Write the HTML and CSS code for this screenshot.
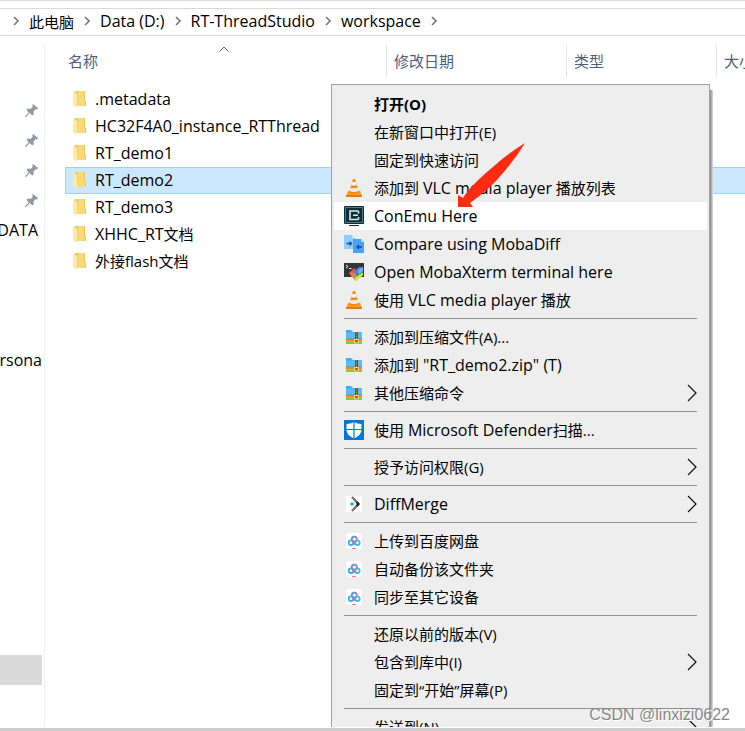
FILE: index.html
```html
<!DOCTYPE html>
<html lang="zh-CN">
<head>
	<meta charset="UTF-8">
	<title>workspace</title>
	<link rel="stylesheet" href="styles.css">
</head>
<body>
	<!-- 公用图标 -->
	<svg class="defs" aria-hidden="true">
		<symbol id="next" viewBox="0 0 6 10"><path d="M1 1l4 4-4 4" fill="none" stroke="#7a7a7a" stroke-width="1.6"/></symbol>
		<symbol id="more" viewBox="0 0 10 18"><path d="M1 1l8 8-8 8" fill="none" stroke="#111" stroke-width="1.2"/></symbol>
		<symbol id="pin" viewBox="0 0 13 13">
			<path d="M8 0l5 4-1 1.500-1.500-.2-2 2.200.3 2.700-1.500 1.400-2.600-2.500L1 13 0 12.700.2 12l3.500-3.600L1.500 5.700l1.300-1.200 2.700.4L7.700 2.700 7.300 1z" fill="#8e9aa5"/>
		</symbol>
		<symbol id="folder" viewBox="0 0 13 18">
			<path d="M2 1h10v9l1 1v5H2z" fill="#f0c659"/>
			<path d="M5 1h6v9l1 1v5H4z" fill="#f9d978"/>
			<path d="M0 1l4 3v13l-1 .5L0 15z" fill="#ffe9a6"/>
		</symbol>
		<symbol id="vlc" viewBox="0 0 20 20">
			<path d="M4 13h12l2 5.500H2z" fill="#ff9a1c"/>
			<path d="M2 17h16v2H2z" fill="#e87b08"/>
			<path d="M9 1h2l4 13.500q-5 2.500-10 0z" fill="#f58a0c"/>
			<path d="M8.200 4h3.600l1 3.500H7.200z" fill="#f3f3f3"/>
			<path d="M6.300 10h7.400l.8 3q-4.500 1.800-9 0z" fill="#e9e9e9"/>
		</symbol>
		<symbol id="zip" viewBox="0 0 20 20">
			<path d="M2 3h5l2 2h9v9H2z" fill="#42aef0"/>
			<path d="M2 6l16-1v6H2z" fill="#58bdf7"/>
			<path d="M2 12h16v2.500H2z" fill="#f58220"/>
			<path d="M2 14.500h16V17H2z" fill="#8bc727"/>
			<path d="M11 5h3v10h-3z" fill="#8b4513"/>
			<path d="M12.500 5v8" stroke="#d59a4c" stroke-width="1" stroke-dasharray="1 1"/>
			<path d="M10.700 12.500h3.600v3.500h-3.600z" fill="#a65a12" stroke="#ffe08a" stroke-width="1"/>
		</symbol>
		<symbol id="pan" viewBox="0 0 20 20">
			<rect x="2" y="2" width="16" height="16" rx="3" fill="#fff"/>
			<g fill="none" stroke-width="1.800">
				<circle cx="10.300" cy="8.300" r="2.600" stroke="#f0647c"/>
				<path d="M7.700 8.500a2.600 2.600 0 0 1 4.500-2" stroke="#4aa5f5"/>
				<circle cx="7" cy="11.700" r="2.300" stroke="#35aef5"/>
				<circle cx="13.300" cy="11.700" r="2.300" stroke="#35bdf5"/>
				<path d="M8.600 10.100l3 3.200" stroke="#f0647c"/>
			</g>
			<path d="M8 17.500h4" stroke="#f77c92" stroke-width="1"/>
		</symbol>
	</svg>

	<div class="window">
		<nav class="address">
			<svg class="next"><use href="#next"/></svg>
			<a href="#">此电脑</a>
			<svg class="next"><use href="#next"/></svg>
			<a href="#" class="en">Data (D:)</a>
			<svg class="next"><use href="#next"/></svg>
			<a href="#" class="en">RT-ThreadStudio</a>
			<svg class="next"><use href="#next"/></svg>
			<a href="#" class="en">workspace</a>
			<svg class="next"><use href="#next"/></svg>
		</nav>

		<div class="main">
			<div class="side en">
				<div class="side-row"><svg class="pin"><use href="#pin"/></svg></div>
				<div class="side-row"><svg class="pin"><use href="#pin"/></svg></div>
				<div class="side-row"><svg class="pin"><use href="#pin"/></svg></div>
				<div class="side-row"><svg class="pin"><use href="#pin"/></svg></div>
				<div class="side-row">DATA</div>
				<div class="side-row drive">ersona</div>
				<div class="side-row current"></div>
			</div>

			<div class="list">
				<table class="files">
					<colgroup>
						<col class="col-name"><col class="col-date"><col class="col-type"><col>
					</colgroup>
					<thead>
						<tr>
							<th class="sorted"><svg class="sort" viewBox="0 0 10 6"><path d="M.5 5.500L5 1l4.500 4.500" fill="none" stroke="#666"/></svg><button>名称</button></th>
							<th><button>修改日期</button></th>
							<th><button>类型</button></th>
							<th><button>大小</button></th>
						</tr>
					</thead>
					<tbody>
						<tr><td colspan="4" class="en"><svg class="folder"><use href="#folder"/></svg>.metadata</td></tr>
						<tr><td colspan="4" class="en"><svg class="folder"><use href="#folder"/></svg>HC32F4A0_instance_RTThread</td></tr>
						<tr><td colspan="4" class="en"><svg class="folder"><use href="#folder"/></svg>RT_demo1</td></tr>
						<tr class="selected"><td colspan="4" class="en"><svg class="folder"><use href="#folder"/></svg>RT_demo2</td></tr>
						<tr><td colspan="4" class="en"><svg class="folder"><use href="#folder"/></svg>RT_demo3</td></tr>
						<tr><td colspan="4"><svg class="folder"><use href="#folder"/></svg><span class="en">XHHC_RT</span>文档</td></tr>
						<tr><td colspan="4"><svg class="folder"><use href="#folder"/></svg>外接flash文档</td></tr>
					</tbody>
				</table>
			</div>
		</div>

		<!-- 右键菜单 -->
		<div class="menu">
			<button class="item default"><span class="icon"></span>打开(O)</button>
			<button class="item"><span class="icon"></span>在新窗口中打开(E)</button>
			<button class="item"><span class="icon"></span>固定到快速访问</button>
			<button class="item"><svg class="icon"><use href="#vlc"/></svg><span>添加到 <span class="en">VLC media player</span> 播放列表</span></button>
			<button class="item en hover">
				<svg class="icon" viewBox="0 0 20 20">
					<rect width="20" height="18" rx="1" fill="#06303c"/>
					<rect x="1.500" y="1.500" width="17" height="15" fill="none" stroke="#6f8a91" stroke-width=".8"/>
					<path d="M14.500 5H6v8.500h8.500M14.500 5v2.500M14.500 11v2.500M9 9.200h5" fill="none" stroke="#e9e5d5" stroke-width="1.600"/>
					<path d="M5 19.500h10" stroke="#06303c" stroke-width="1"/>
				</svg>ConEmu Here
			</button>
			<button class="item en">
				<svg class="icon" viewBox="0 0 20 20">
					<path d="M0 1h8l3 3v11H0z" fill="#8fcbfb"/>
					<path d="M8 1l3 3H8z" fill="#d3ebff"/>
					<path d="M9 5h8l3 3v11H9z" fill="#46a2f5"/>
					<path d="M17 5l3 3h-3z" fill="#b5dcff"/>
					<path d="M2.500 9.500H7M5.500 7.500l2 2-2 2M18 13h-4.500M15 11l-2 2 2 2" fill="none" stroke="#0b50a0" stroke-width="1.300"/>
				</svg>Compare using MobaDiff
			</button>
			<button class="item en">
				<svg class="icon" viewBox="0 0 20 20">
					<path d="M0 1h20v14H0z" fill="#333638"/>
					<path d="M2 3l2 1.500L2 6M5 6.500h2.500" fill="none" stroke="#fff" stroke-width=".9"/>
					<path d="M5 11l5-5 3 3-2 5-3 1z" fill="#f04a3e"/>
					<path d="M10 10l5-5h4v4l-5 5z" fill="#3d83ee"/>
					<path d="M14 8l5-3v4l-4 4z" fill="#77abf8"/>
					<path d="M7 14l4-3 2 3 6-4v3l-7 6z" fill="#78d52c"/>
					<path d="M5 11l3-1 4 4-1 3z" fill="#ff6b5c"/>
					<path d="M11 16l6-4 2-1v2l-7 6z" fill="#c6f13b"/>
				</svg>Open MobaXterm terminal here
			</button>
			<button class="item"><svg class="icon"><use href="#vlc"/></svg><span>使用 <span class="en">VLC media player</span> 播放</span></button>
			<hr>
			<button class="item"><svg class="icon"><use href="#zip"/></svg>添加到压缩文件(A)...</button>
			<button class="item"><svg class="icon"><use href="#zip"/></svg><span>添加到 <span class="en">"RT_demo2.zip" (T)</span></span></button>
			<button class="item"><svg class="icon"><use href="#zip"/></svg>其他压缩命令<svg class="more"><use href="#more"/></svg></button>
			<hr>
			<button class="item">
				<svg class="icon" viewBox="0 0 20 20">
					<path d="M0 0h20v20H0z" fill="#0078d7"/>
					<path d="M10 2q3 2 7.500 2v6q0 5-7.500 8.500Q2.500 15 2.500 10V4Q7 4 10 2z" fill="#fff"/>
					<path d="M10 2v17M2 9.500h16" stroke="#0078d7" stroke-width="1.200"/>
				</svg><span>使用 <span class="en">Microsoft Defender</span>扫描...</span>
			</button>
			<hr>
			<button class="item"><span class="icon"></span>授予访问权限(G)<svg class="more"><use href="#more"/></svg></button>
			<hr>
			<button class="item en">
				<svg class="icon" viewBox="0 0 20 20">
					<path d="M2 2h16v16H2z" fill="#fff"/>
					<path d="M8 3l6.500 7L8 17" fill="none" stroke="#777" stroke-width="2.400"/>
					<path d="M12.500 8l2 2-2 2" fill="none" stroke="#222" stroke-width="2"/>
					<circle cx="8" cy="10" r="1.800" fill="#12b5cc"/>
				</svg>DiffMerge<svg class="more"><use href="#more"/></svg>
			</button>
			<hr>
			<button class="item"><svg class="icon"><use href="#pan"/></svg>上传到百度网盘</button>
			<button class="item"><svg class="icon"><use href="#pan"/></svg>自动备份该文件夹</button>
			<button class="item"><svg class="icon"><use href="#pan"/></svg>同步至其它设备</button>
			<hr>
			<button class="item"><span class="icon"></span>还原以前的版本(V)</button>
			<button class="item"><span class="icon"></span>包含到库中(I)<svg class="more"><use href="#more"/></svg></button>
			<button class="item"><span class="icon"></span>固定到“开始”屏幕(P)</button>
			<hr>
			<button class="item"><span class="icon"></span>发送到(N)<svg class="more"><use href="#more"/></svg></button>
		</div>

		<svg class="arrow" viewBox="0 0 68 66"><path d="M67 2Q58 17 45 32 33 47 12 62L15 66H0V54L5 57Q12 45 36 25 52 11 67 2z" fill="#ff2a12"/></svg>
	</div>
	<div class="mark">CSDN @linxizi0622</div>
</body>
</html>
```

FILE: styles.css
```css
*{
	margin:0;
	padding:0;
	box-sizing: border-box;
}
body{
	font-family: "Open Sans","Noto Sans CJK SC",sans-serif;
	font-size: 15px;
	color:#000;
	background: #fff;
}
button{
	font: inherit;
	color: inherit;
	background: none;
	border:0;
	text-align: left;
	white-space: nowrap;
}
a{
	color:#000;
	text-decoration: none;
}
/* 英文比中文大一号 */
.en{
	font-size: 16px;
}
.defs{
	position: absolute;
	width: 0;
	height: 0;
}
.window{
	position: relative;
	height: 100vh;
	border-top:1px solid #d9d9d9;
	border-bottom:3px solid #ccc;
	padding-top:7px;
	padding-bottom:1px;
	display: flex;
	flex-direction: column;
	overflow: hidden;
}
/* 地址栏 */
.address{
	display: flex;
	align-items: center;
	gap:10px;
	height: 28px;
	padding-left:13px;
	padding-bottom:2px;
	border-top:1px solid #d9d9d9;
	border-bottom:1px solid #d9d9d9;
	white-space: nowrap;
}
.next{
	width: 6px;
	height: 10px;
}
.main{
	flex:1;
	display: flex;
	align-items: flex-start;
	min-height: 0;
	padding-top:9px;
}
/* 左侧导航 */
.side{
	flex:none;
	width: 45px;
	height: 100%;
	padding-top:50px;
	padding-right:2px;
	border-right:1px solid #f0f0f0;
	overflow: hidden;
}
.side-row{
	display: flex;
	align-items: center;
	justify-content: flex-end;
	height: 30px;
	padding-right:4px;
}
.pin{
	width: 13px;
	height: 13px;
}
.drive{
	margin-top:100px;
	padding-right:0;
}
.current{
	margin-top:280px;
	background: #d9d9d9;
}
/* 文件列表 */
.list{
	flex:1;
	min-width: 0;
	margin-left:20px;
}
.files{
	width: 100%;
	table-layout: fixed;
	border-spacing: 0;
}
.col-name{
	width: 321px;
}
.col-date{
	width: 180px;
}
.col-type{
	width: 150px;
}
th{
	position: relative;
	height: 32px;
	padding-left:7px;
	padding-bottom:2px;
	border-left:1px solid #e5e5e5;
	font-weight: normal;
	text-align: left;
	color:#4c607a;
	overflow: hidden;
}
.sorted{
	padding-left:3px;
	border-left:0;
}
.sort{
	position: absolute;
	top:1px;
	left:48%;
	width: 10px;
	height: 6px;
}
tbody::before{
	content:"";
	display: block;
	height: 9px;
}
td{
	height: 27px;
	padding-left:7px;
	border:1px solid transparent;
	line-height: 25px;
	white-space: nowrap;
}
.selected td{
	background: #cce8ff;
	border-color:#99d1ff;
	border-right:0;
}
.folder{
	width: 13px;
	height: 18px;
	margin-right:9px;
	vertical-align: -3px;
}
/* 右键菜单 */
.menu{
	position: absolute;
	top:83px;
	left:331px;
	bottom:1px;
	width: 379px;
	padding:5px 2px 0;
	background: #eee;
	border:1px solid #a0a0a0;
	border-bottom:0;
	overflow: hidden;
}
.window::after{
	content:"";
	position: absolute;
	top:89px;
	left:710px;
	bottom:1px;
	width: 3px;
	background: linear-gradient(to right,#888,#ddd);
}
.item{
	display: flex;
	align-items: center;
	width: 100%;
	height: 28px;
	padding:0 10px;
	line-height: 24px;
}
.default{
	font-weight: bold;
}
.hover{
	background: #fff;
}
.icon{
	flex:none;
	width: 20px;
	height: 20px;
	margin-right:10px;
}
.more{
	width: 10px;
	height: 18px;
	margin-left:auto;
}
hr{
	height: 1px;
	margin:4px 10px;
	border:0;
	background: #919191;
}
.arrow{
	position: absolute;
	top:140px;
	left:458px;
	width: 68px;
	height: 66px;
}
.mark{
	position: absolute;
	right:15px;
	bottom:6px;
	font-family: "Liberation Sans",sans-serif;
	font-size: 16px;
	line-height: 20px;
	color:#888;
	text-shadow: 1px 1px 0 #fff;
}
```
